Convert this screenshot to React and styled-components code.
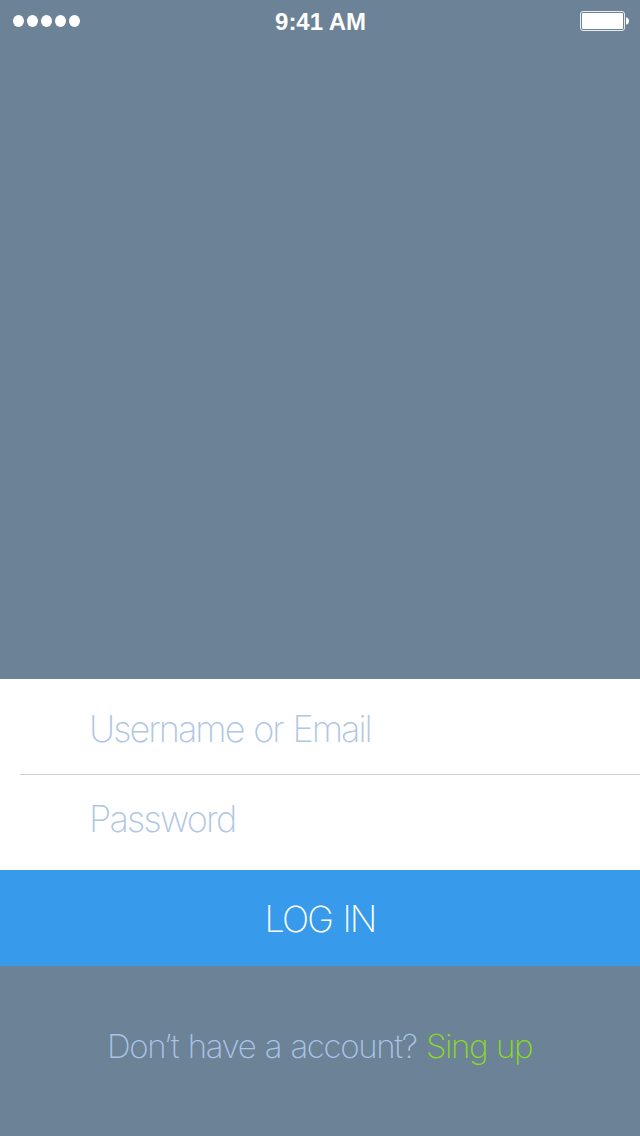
import React from "react";
import styled, { createGlobalStyle } from "styled-components";

const GlobalStyle = createGlobalStyle`
  *, *::before, *::after { box-sizing: border-box; }
  body { margin: 0; background: #6c8296; }
`;

const Screen = styled.main`
  display: flex;
  flex-direction: column;
  width: 640px;
  height: 1136px;
  overflow: hidden;
  background: #6c8296;
  font-family: Inter, "Liberation Sans", sans-serif;
  font-weight: 200;
`;

const StatusBar = styled.header`
  display: grid;
  grid-template-columns: 1fr auto 1fr;
  align-items: center;
  height: 42px;
  padding: 0 11px 0 13px;
  color: #fff;
`;

const Signal = styled.div`
  display: flex;
  gap: 3px;
`;

const Dot = styled.span`
  width: 11px;
  height: 12px;
  border-radius: 50%;
  background: #fff;
`;

const Clock = styled.time`
  padding-top: 2px;
  font: 700 24px/40px "Liberation Sans", sans-serif;
  letter-spacing: -0.05px;
  margin-right: 1px;
`;

const Battery = styled.svg`
  justify-self: end;
  display: block;
`;

const Hero = styled.div`
  flex: 1;
`;

const Form = styled.form`
  display: flex;
  flex-direction: column;
`;

const Fields = styled.div`
  height: 191px;
  background: #fff;
`;

const Field = styled.input`
  display: block;
  width: 100%;
  height: 95px;
  padding: ${(p) => p.$top}px 0 ${(p) => p.$bottom}px 89px;
  border: 0;
  outline: 0;
  background: transparent;
  font-family: inherit;
  font-weight: 200;
  font-size: 36px;
  line-height: 44px;
  letter-spacing: ${(p) => p.$spacing}px;
  word-spacing: 1.6px;
  &::placeholder { color: #afc7e3; opacity: 1; }
`;

const Divider = styled.hr`
  height: 1px;
  margin: 0 0 0 20px;
  border: 0;
  background: #cfcfcf;
`;

const LoginButton = styled.button`
  height: 96px;
  padding: 2px 0 0;
  border: 0;
  background: #389aeb;
  color: #fff;
  font-family: inherit;
  font-weight: 200;
  font-size: 36px;
  line-height: 44px;
  letter-spacing: -1.8px;
  word-spacing: 2px;
`;

const Footer = styled.footer`
  height: 170px;
  padding: 60px 0 0 107px;
  color: #a9c4e8;
  font-size: 33px;
  line-height: 40px;
  white-space: pre;
`;

const Prompt = styled.span`
  letter-spacing: -1.34px;
  word-spacing: 1.4px;
`;

const SignUp = styled.a`
  color: #8adb24;
  letter-spacing: -1.4px;
  word-spacing: 1px;
`;

export default function App() {
  return (
    <>
      <GlobalStyle />
      <Screen>
        <StatusBar>
          <Signal>
            {[0, 1, 2, 3, 4].map((n) => <Dot key={n} />)}
          </Signal>
          <Clock>9:41 AM</Clock>
          <Battery width="49" height="20" viewBox="0 0 49 20">
            <rect x="0.5" y="0.5" width="44" height="19" rx="2.5" fill="none" stroke="#fff" strokeOpacity=".85" />
            <rect x="2" y="2" width="41" height="16" rx="1" fill="#fff" />
            <path d="M46 6.2C50 7 50 13 46 13.8Z" fill="#fff" />
          </Battery>
        </StatusBar>
        <Hero />
        <Form>
          <Fields>
            <Field $top={4} $bottom={0} $spacing={-1.96} placeholder="Username or Email" />
            <Divider />
            <Field $top={0} $bottom={7} $spacing={-1.75} type="password" placeholder="Password" />
          </Fields>
          <LoginButton type="button">LOG IN</LoginButton>
        </Form>
        <Footer>
          <Prompt>Don’t have a account? </Prompt>
          <SignUp>Sing up</SignUp>
        </Footer>
      </Screen>
    </>
  );
}
